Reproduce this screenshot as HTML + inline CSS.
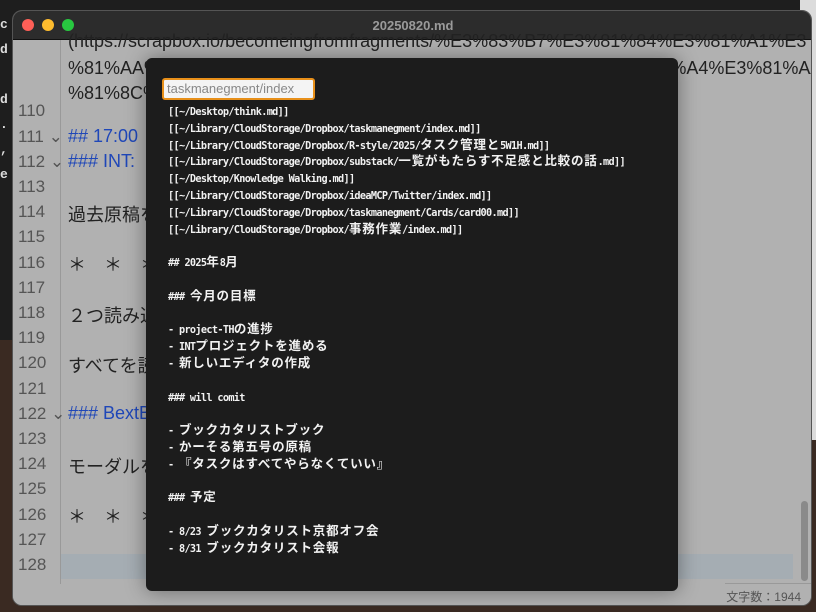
<!DOCTYPE html>
<html><head><meta charset="utf-8"><style>
*{margin:0;padding:0;box-sizing:border-box}
html{overflow:hidden}
body{width:816px;height:612px;overflow:hidden;background:#3a2a22;position:relative;font-family:"Liberation Sans","Noto Sans CJK JP",sans-serif}
.term{position:absolute;left:0;top:0;width:816px;height:340px;background:#1e1e1e}
.termr{position:absolute;left:800px;top:0;width:16px;height:440px;background:#dcdcdc}
.win{position:absolute;left:12px;top:10px;width:800px;height:596px;border-radius:10px;overflow:hidden;background:#b1b1b1;border:1px solid #555}
.tb{position:absolute;left:0;top:0;width:800px;height:29px;background:#2c2c2c;border-bottom:1px solid #111}
.tb .t{position:absolute;left:0;width:800px;top:7px;text-align:center;color:#9a9a9a;font-weight:bold;font-size:13px}
.dot{position:absolute;top:8px;width:12px;height:12px;border-radius:50%}
.gut{position:absolute;left:0;top:29px;width:48px;height:550px;border-right:1px solid #999;background:#b1b1b1}
.ln{position:absolute;left:5px;font-size:17px;color:#555}
.tx{position:absolute;left:55px;font-size:18px;color:#222;white-space:nowrap}
.bl{color:#1f47b8}
.cur{position:absolute;left:0;top:543px;width:780px;height:25px;background:#a5adb3}
.status{position:absolute;left:0;top:573px;width:800px;height:23px;background:#b1b1b1}
.status span{position:absolute;right:12px;top:4px;font-size:12px;color:#555}
.sep{position:absolute;left:712px;top:572px;width:88px;height:1px;background:#999}
.sb{position:absolute;left:788px;top:490px;width:7px;height:80px;background:#8a8a8a;border-radius:4px}
.modal{position:absolute;left:146px;top:58px;width:532px;height:533px;background:#1c1c1c;border-radius:6px;box-shadow:0 0 20px rgba(0,0,0,.4)}
.inp{position:absolute;left:16px;top:20px;width:153px;height:22px;border:2px solid #e8901a;border-radius:3px;background:#f4f4f4;font-size:13px;color:#888;padding:1px 3px}
.pre{position:absolute;left:22px;top:47px;font-family:"DejaVu Sans Mono","Noto Sans CJK JP",monospace;font-size:10.2px;letter-spacing:-0.65px;color:#f2f2f2;font-weight:bold}
.pre div{height:16.8px;line-height:16.8px;white-space:pre}
.j{font-family:"Noto Sans CJK JP",sans-serif;font-size:12.5px;letter-spacing:0.8px;line-height:10px}
</style></head><body>
<div class="term"></div><div class="termr"></div>
<div style="position:absolute;left:0;top:12px;color:#ddd;font-family:'Liberation Mono',monospace;font-size:13px;line-height:25px;font-weight:bold">c<br>d<br><br>d<br>.<br>,<br>e</div>
<div class="win">
<div class="tb"><div class="dot" style="left:9px;background:#fe5f57"></div><div class="dot" style="left:29px;background:#febc2e"></div><div class="dot" style="left:49px;background:#28c840"></div><div class="t">20250820.md</div></div>
<div class="cur"></div>
<div class="gut"></div>
<div class="tx" style="top:20px">(https://scrapbox.io/becomeingfromfragments/%E3%83%B7%E3%81%84%E3%81%A1%E3</div>
<div class="tx" style="top:47px">%81%AA%E3%81%8C%E3%80%8A%E5%BC%B1%E3%81%84%E3%81%A4%E3%81%AA%E3</div>
<div class="tx" style="top:72px">%81%8C%</div>
<div class="ln" style="top:90px">110</div>
<div class="ln" style="top:116px">111 ⌄</div><div class="tx bl" style="top:115px">## 17:00</div>
<div class="ln" style="top:141px">112 ⌄</div><div class="tx bl" style="top:140px">### INT:</div>
<div class="ln" style="top:166px">113</div>
<div class="ln" style="top:191px">114</div><div class="tx" style="top:190px">過去原稿を</div>
<div class="ln" style="top:216px">115</div>
<div class="ln" style="top:242px">116</div><div class="tx" style="top:240px">＊　＊　＊</div>
<div class="ln" style="top:267px">117</div>
<div class="ln" style="top:292px">118</div><div class="tx" style="top:291px">２つ読み込</div>
<div class="ln" style="top:317px">119</div>
<div class="ln" style="top:342px">120</div><div class="tx" style="top:341px">すべてを読</div>
<div class="ln" style="top:368px">121</div>
<div class="ln" style="top:393px">122 ⌄</div><div class="tx bl" style="top:392px">### BextB</div>
<div class="ln" style="top:418px">123</div>
<div class="ln" style="top:443px">124</div><div class="tx" style="top:442px">モーダルを</div>
<div class="ln" style="top:468px">125</div>
<div class="ln" style="top:494px">126</div><div class="tx" style="top:492px">＊　＊　＊</div>
<div class="ln" style="top:519px">127</div>
<div class="ln" style="top:544px">128</div>
<div class="sb"></div>
<div class="status"><span>文字数：1944</span></div>
<div class="sep"></div>
</div>
<div class="modal">
<div class="inp">taskmanegment/index</div>
<div class="pre"><div>[[~/Desktop/think.md]]</div><div>[[~/Library/CloudStorage/Dropbox/taskmanegment/index.md]]</div><div>[[~/Library/CloudStorage/Dropbox/R-style/2025/<span class="j">タスク管理と</span>5W1H.md]]</div><div>[[~/Library/CloudStorage/Dropbox/substack/<span class="j">一覧がもたらす不足感と比較の話</span>.md]]</div><div>[[~/Desktop/Knowledge Walking.md]]</div><div>[[~/Library/CloudStorage/Dropbox/ideaMCP/Twitter/index.md]]</div><div>[[~/Library/CloudStorage/Dropbox/taskmanegment/Cards/card00.md]]</div><div>[[~/Library/CloudStorage/Dropbox/<span class="j">事務作業</span>/index.md]]</div><div></div><div>## 2025<span class="j">年</span>8<span class="j">月</span></div><div></div><div>### <span class="j">今月の目標</span></div><div></div><div>- project-TH<span class="j">の進捗</span></div><div>- INT<span class="j">プロジェクトを進める</span></div><div>- <span class="j">新しいエディタの作成</span></div><div></div><div>### will comit</div><div></div><div>- <span class="j">ブックカタリストブック</span></div><div>- <span class="j">かーそる第五号の原稿</span></div><div>- <span class="j">『タスクはすべてやらなくていい』</span></div><div></div><div>### <span class="j">予定</span></div><div></div><div>- 8/23 <span class="j">ブックカタリスト京都オフ会</span></div><div>- 8/31 <span class="j">ブックカタリスト会報</span></div></div>
</div>
</body></html>
